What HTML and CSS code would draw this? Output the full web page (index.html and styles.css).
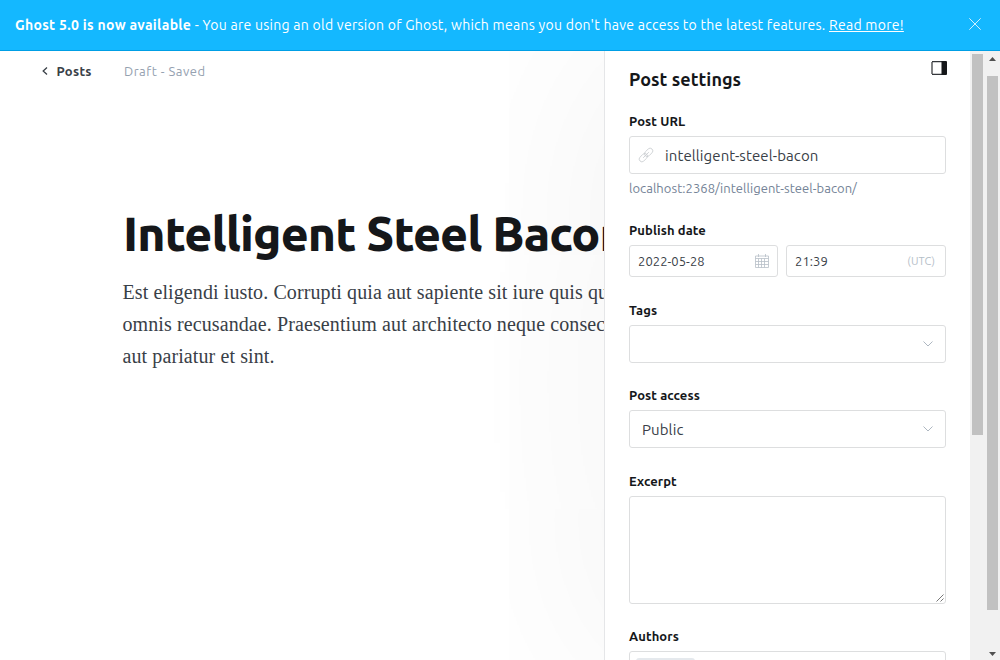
FILE: index.html
```html
<!DOCTYPE html>
<html lang="en">
<head>
<meta charset="utf-8">
<title>Post editor</title>
<link rel="stylesheet" href="styles.css">
</head>
<body>
<div class="app">
  <header class="banner">
    <p class="banner-text"><strong class="banner-strong">Ghost 5.0 is now available</strong><span class="banner-body"> - You are using an old version of Ghost, which means you don't have access to the latest features. <a class="banner-link" href="#">Read more!</a></span></p>
    <svg class="banner-close" viewBox="0 0 12 12"><path d="M.3.3l11.4 11.4M11.7.3L.3 11.7"/></svg>
  </header>
  <div class="workspace">
    <main class="editor">
      <nav class="editor-nav">
        <svg class="back-icon" viewBox="0 0 6 8"><path d="M5 .6L1.2 4 5 7.4"/></svg>
        <a class="back-link">Posts</a>
        <span class="status">Draft - Saved</span>
      </nav>
      <h1 class="title">Intelligent Steel Bacon</h1>
      <p class="body-text">Est eligendi iusto. Corrupti quia aut sapiente sit iure quis qui<br>omnis recusandae. Praesentium aut architecto neque consectetur<br>aut pariatur et sint.</p>
    </main>
    <aside class="settings">
      <div class="settings-head">
        <h2 class="settings-title">Post settings</h2>
        <svg class="panel-icon" viewBox="0 0 16 14"><path class="panel-edge" d="M1 1v12"/><path class="panel-frame" d="M1 .6h10M1 13.4h10"/><path class="panel-side" d="M10.500 0H15a1 1 0 0 1 1 1v12a1 1 0 0 1-1 1h-4.500z"/></svg>
      </div>
      <section class="group group-url">
        <label class="label">Post URL</label>
        <div class="field">
          <svg class="link-icon" viewBox="0 0 14 14"><g transform="rotate(-45 7 7)"><rect x="-1.500" y="4.300" width="9.500" height="5.400" rx="2.700"/><rect x="6" y="4.300" width="9.500" height="5.400" rx="2.700"/><path d="M3 7h8"/></g></svg>
          <span class="value">intelligent-steel-bacon</span>
        </div>
        <p class="hint">localhost:2368/intelligent-steel-bacon/</p>
      </section>
      <section class="group group-date">
        <label class="label">Publish date</label>
        <div class="date-row">
          <div class="field small date"><span class="value">2022-05-28</span>
            <svg class="calendar-icon" viewBox="0 0 14 14"><path d="M.5 2h13v11.500H.5zM.5 4.500h13M.5 7.500h13M.5 10.500h13M3.500 4.500v9M6.500 4.500v9M9.500 4.500v9M3.500 0v3M10.500 0v3"/></svg>
          </div>
          <div class="field small time"><span class="value value-time">21:39</span><span class="utc">(UTC)</span></div>
        </div>
      </section>
      <section class="group group-tags">
        <label class="label">Tags</label>
        <div class="field select"><svg class="chevron" viewBox="0 0 10 6"><path d="M.5.5L5 5 9.500.5"/></svg></div>
      </section>
      <section class="group group-access">
        <label class="label">Post access</label>
        <div class="field select"><span class="value">Public</span><svg class="chevron" viewBox="0 0 10 6"><path d="M.5.5L5 5 9.500.5"/></svg></div>
      </section>
      <section class="group group-excerpt">
        <label class="label">Excerpt</label>
        <div class="field area"><svg class="grip" viewBox="0 0 8 8"><path d="M.5 7.500l7-7M4.500 7.500l3-3"/></svg></div>
      </section>
      <section class="group">
        <label class="label">Authors</label>
        <div class="field authors"><span class="token"></span></div>
      </section>
    </aside>
    <div class="track inner"><div class="thumb"></div></div>
    <div class="track outer">
      <svg class="arrow" viewBox="0 0 7 4"><path d="M0 4L3.500 0 7 4z"/></svg>
      <div class="thumb"></div>
      <svg class="arrow down" viewBox="0 0 7 4"><path d="M0 0l3.500 4L7 0z"/></svg>
    </div>
  </div>
</div>
</body>
</html>
```
FILE: styles.css
```css
* { box-sizing: border-box; }
body { margin: 0; font-family: Ubuntu, "Noto Sans", sans-serif; letter-spacing: .1px; color: #15171a; background: #fff; }
h1, h2, p { margin: 0; }
svg { display: block; fill: none; overflow: visible; }
.app { display: flex; flex-direction: column; width: 1000px; height: 660px; overflow: hidden; }
.banner { display: flex; flex: none; justify-content: space-between; align-items: center; height: 51px; padding: 0 19px 2px 15px; background: #14b8ff; border-bottom: 1px solid #009fe5; color: #fff; }
.banner-text { padding-top: 2px; font-size: 14px; line-height: 20px; letter-spacing: .27px; white-space: nowrap; }
.banner-strong { letter-spacing: .3px; }
.banner-link { color: #fff; text-underline-offset: 1px; }
.banner-close { width: 12px; height: 12px; stroke: #fff; stroke-width: .8; }
.workspace { display: flex; flex: 1; min-height: 0; overflow: hidden; }
.editor { width: 604px; overflow: hidden; white-space: nowrap; }
.editor-nav { display: flex; align-items: center; height: 20px; margin: 10px 0 0 42px; font-size: 13px; letter-spacing: .5px; }
.back-icon { width: 6px; height: 8px; stroke: #394047; stroke-width: 1.3; }
.back-link { width: 67.5px; margin-left: 8.5px; font-weight: 600; letter-spacing: .3px; color: #394047; }
.status { color: #95a1b0; }
.title { margin: 121px 0 0 123px; font-size: 48px; line-height: 62px; font-weight: 800; letter-spacing: -.86px; }
.body-text { margin: 12px 0 0 122.500px; font: 20px/32px "Liberation Serif", serif; color: #394047; }
.settings { width: 366px; padding: 0 24px; background: #fff; border-left: 1px solid #e5e6e8; box-shadow: 0 0 220px rgba(0, 0, 0, .06); }
.settings-head { display: flex; justify-content: space-between; height: 60px; }
.settings-title { padding-top: 16px; font-size: 18px; line-height: 24px; font-weight: 750; letter-spacing: .05px; white-space: nowrap; }
.panel-icon { width: 16px; height: 14px; margin: 10px -1px 0 0; }
.panel-edge { stroke: #818284; stroke-width: 2; }
.panel-frame { stroke: #33363a; stroke-width: 1.2; }
.panel-side { fill: #15171a; }
.label { display: block; height: 25px; font-size: 13px; line-height: 20px; font-weight: 600; letter-spacing: .1px; white-space: nowrap; }
.field { display: flex; align-items: center; width: 317px; height: 38px; border: 1px solid #dddedf; border-radius: 3px; color: #394047; font-size: 15px; white-space: nowrap; }
.link-icon { width: 14px; height: 14px; margin: 0 12px 0 9px; stroke: #c9ccd0; stroke-width: .8; }
.hint { height: 28px; font-size: 13px; line-height: 28px; letter-spacing: .05px; color: #738296; white-space: nowrap; }
.group-url { height: 109px; }
.group-date { height: 80px; }
.group-tags { height: 85px; }
.group-access { height: 86px; }
.group-excerpt { height: 155px; }
.date-row { display: flex; gap: 8px; }
.small { justify-content: space-between; height: 32px; padding: 0 8px; font-size: 13px; letter-spacing: .05px; }
.date { width: 149px; }
.time { width: 160px; padding-right: 10px; }
.calendar-icon { width: 14px; height: 14px; stroke: #b8bfc8; stroke-width: .8; }
.utc { font-size: 11px; letter-spacing: .1px; color: #b5bec8; }
.select { justify-content: space-between; padding: 0 12px; }
.chevron { width: 10px; height: 6px; margin-left: auto; stroke: #aeb7c1; }
.area { height: 108px; align-items: flex-end; justify-content: flex-end; padding: 1px; }
.grip { width: 8px; height: 8px; stroke: #555; stroke-width: .8; }
.authors { align-items: flex-start; padding: 6px; }
.token { width: 59px; height: 25px; border-radius: 3px; background: #e5e9ed; }
.track { display: flex; flex-direction: column; align-items: center; width: 15px; background: #f1f1f1; }
.thumb { width: 11px; background: #c1c1c1; }
.inner { padding-top: 3px; }
.inner .thumb { height: 381px; }
.outer { padding: 6px 0 4px; }
.outer .thumb { height: 534px; margin-top: 15px; }
.arrow { width: 7px; height: 4px; fill: #505050; }
.down { margin-top: auto; }
```
